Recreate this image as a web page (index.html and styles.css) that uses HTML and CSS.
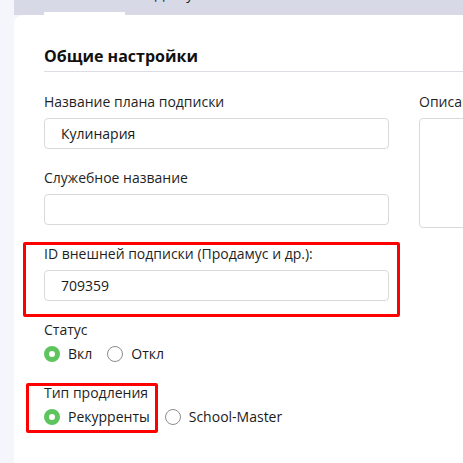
FILE: index.html
```html
<!DOCTYPE html>
<html lang="ru">
<head>
<meta charset="utf-8">
<link rel="stylesheet" href="styles.css">
</head>
<body>
<div class="page">
  <div class="tabs">
    <div class="tab tab-active"><span class="tab-label">Основное</span></div>
    <div class="tab"><span class="tab-label">Доступ</span></div>
  </div>
  <div class="card">
    <h2 class="section-title">Общие настройки</h2>
    <div class="form-grid">
      <div class="col">
        <div class="group">
          <label class="label">Название плана подписки</label>
          <div class="input">Кулинария</div>
        </div>
        <div class="group">
          <label class="label">Служебное название</label>
          <div class="input"></div>
        </div>
        <div class="group marked marked-id">
          <label class="label">ID внешней подписки (Продамус и др.):</label>
          <div class="input">709359</div>
        </div>
        <div class="group group-radio">
          <label class="label">Статус</label>
          <div class="radios">
            <span class="radio radio-on"></span><span class="radio-text">Вкл</span>
            <span class="radio"></span><span class="radio-text">Откл</span>
          </div>
        </div>
        <div class="group group-radio marked marked-type">
          <label class="label">Тип продления</label>
          <div class="radios">
            <span class="radio radio-on"></span><span class="radio-text">Рекурренты</span>
            <span class="radio"></span><span class="radio-text">School-Master</span>
          </div>
        </div>
        <h2 class="section-title section-next">Настройки доступа</h2>
      </div>
      <div class="col">
        <label class="label">Описание</label>
        <div class="textarea"></div>
      </div>
    </div>
  </div>
</div>
</body>
</html>
```
FILE: styles.css
```css
html, body {
  margin: 0;
  padding: 0;
}
body {
  background: #f5f6fb;
  font-family: "Open Sans", "Noto Sans", sans-serif;
  color: #1f1f1f;
  overflow: hidden;
}
.page {
  padding-left: 14px;
}
.tabs {
  height: 15px;
  background: #d7d9e7;
  display: flex;
  padding-left: 30px;
  overflow: hidden;
}
.tab {
  width: 81px;
  height: 15px;
  margin-right: 30px;
}
.tab-active {
  box-shadow: inset 0 -3px 0 #ffffff;
}
.tab-label {
  display: block;
  margin-top: -16px;
  line-height: 20px;
  font-size: 14px;
  color: #1f1f1f;
  white-space: nowrap;
}
.tab-active .tab-label {
  visibility: hidden;
}
.card {
  background: #ffffff;
  border-top-left-radius: 9px;
  padding: 31px 0 0 30px;
  height: 470px;
}
.section-title {
  margin: 0 0 21px 0;
  font-size: 16px;
  line-height: 20px;
  font-weight: 700;
  color: #111111;
  padding-bottom: 5px;
  border-bottom: 1px solid #dcdde8;
}
.section-next {
  border-bottom: none;
  margin-top: 35px;
}
.form-grid {
  display: grid;
  grid-template-columns: 345px 1fr;
  column-gap: 30px;
}
.group {
  margin-bottom: 20px;
}
.label {
  display: block;
  font-size: 14px;
  line-height: 18px;
  margin-bottom: 7px;
  color: #1f1f1f;
  white-space: nowrap;
}
.group-radio .label {
  margin-bottom: 5px;
}
.input {
  box-sizing: border-box;
  height: 31px;
  border: 1px solid #d9d9dc;
  border-radius: 4px;
  padding-left: 16px;
  font-size: 14px;
  line-height: 29px;
  color: #1a1a1a;
}
.textarea {
  box-sizing: border-box;
  height: 110px;
  border: 1px solid #d9d9dc;
  border-radius: 4px;
}
.radios {
  display: flex;
  align-items: center;
  height: 20px;
}
.radio {
  box-sizing: border-box;
  width: 16px;
  height: 16px;
  border-radius: 50%;
  border: 1px solid #8c8c8c;
  background: #ffffff;
  flex: none;
}
.radio-on {
  border: 5px solid #5ec55e;
  background: #ffffff;
}
.radio-text {
  margin-left: 8px;
  margin-right: 15px;
  font-size: 14px;
  line-height: 20px;
  color: #1a1a1a;
}
.marked {
  position: relative;
}
.marked::after {
  content: "";
  position: absolute;
  box-sizing: border-box;
  border: 3px solid #ff0000;
  border-radius: 2px;
  pointer-events: none;
}
.marked-id::after {
  top: -3px;
  left: -21px;
  width: 377px;
  height: 75px;
}
.marked-type::after {
  top: -1px;
  left: -18px;
  width: 132px;
  height: 50px;
}
```
